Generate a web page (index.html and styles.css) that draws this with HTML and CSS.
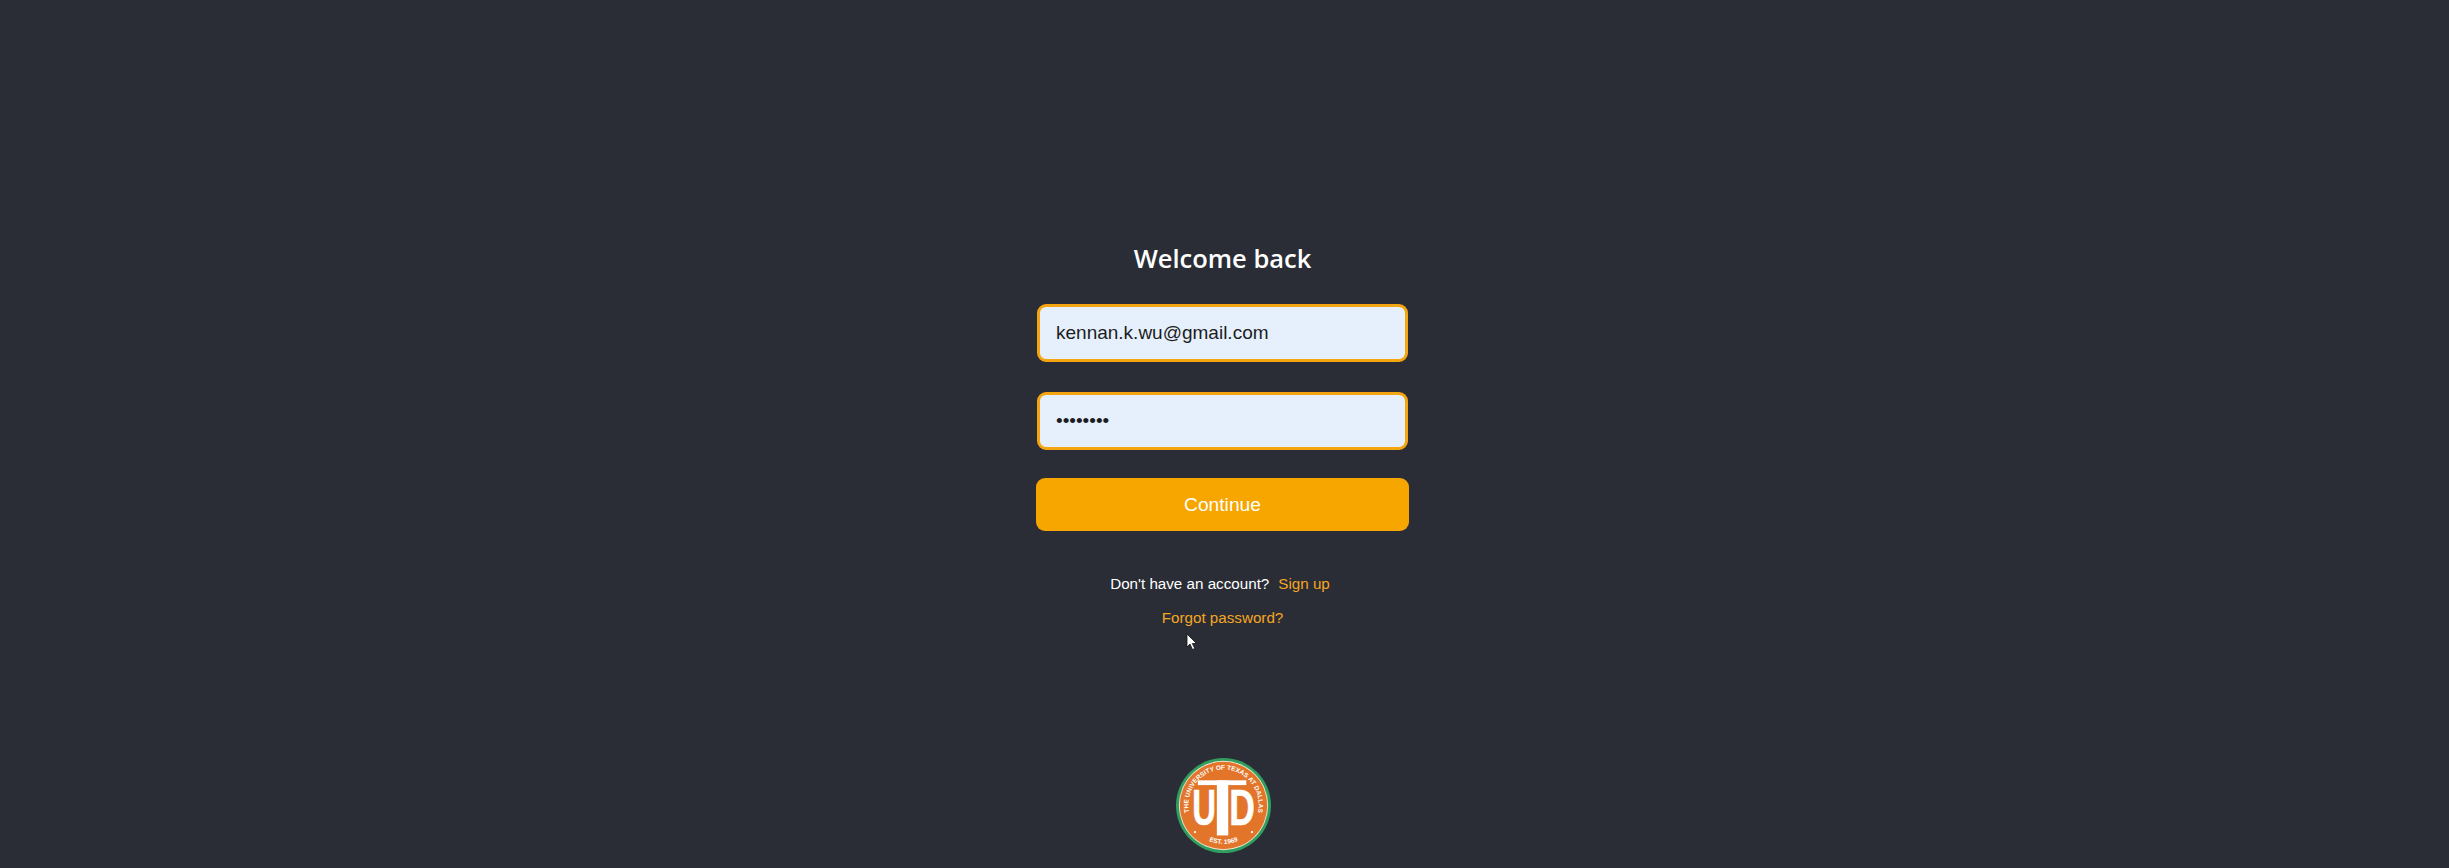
FILE: index.html
```html
<!DOCTYPE html>
<html lang="en">
<head>
    <meta charset="UTF-8">
    <meta name="viewport" content="width=device-width, initial-scale=1.0">
    <title>login</title>

    <!-- styling -->
    <link rel="stylesheet" href="styles.css">
</head>
<body>
    <div class="container-login">
        <form action="" id="loginform">
            <h1 id="login-heading">Welcome back</h1>

            <input type="email" class="login-input" name="email" value="kennan.k.wu@gmail.com">
            <input type="password" class="login-input" name="password" value="password">

            <button type="submit" id="login-btn">Continue</button>
        </form>

        <p class="signup-line">Don't have an account?<a href="#" class="signup-link">Sign up</a></p>
        <p class="forgot-line"><a href="#">Forgot password?</a></p>

        <svg class="seal" viewBox="0 0 100 100" role="img" aria-label="The University of Texas at Dallas seal">
            <defs>
                <path id="seal-top" d="M 17 66 A 37 37 0 1 1 83 66"></path>
                <path id="seal-bottom" d="M 22 79 A 40 40 0 0 0 78 79"></path>
            </defs>
            <circle cx="50" cy="50" r="50" fill="#2f9e5f"></circle>
            <circle cx="50" cy="50" r="47" fill="#f3e3cf"></circle>
            <circle cx="50" cy="50" r="46" fill="#e2752a"></circle>
            <text class="seal-ring"><textPath href="#seal-top" startOffset="50%" text-anchor="middle">THE UNIVERSITY OF TEXAS AT DALLAS</textPath></text>
            <text class="seal-ring"><textPath href="#seal-bottom" startOffset="50%" text-anchor="middle">EST. 1969</textPath></text>
            <circle cx="20" cy="78" r="1.2" fill="#ffffff"></circle>
            <circle cx="80" cy="78" r="1.2" fill="#ffffff"></circle>
            <rect x="23" y="23.5" width="51" height="5" fill="#ffffff"></rect>
            <rect x="43" y="23.5" width="12" height="58" fill="#ffffff"></rect>
            <text class="seal-letter" x="29.5" y="70" textLength="25" lengthAdjust="spacingAndGlyphs" text-anchor="middle">U</text>
            <text class="seal-letter" x="69.5" y="70" textLength="27" lengthAdjust="spacingAndGlyphs" text-anchor="middle">D</text>
        </svg>
    </div>

    <!-- mouse pointer caught in the capture -->
    <svg class="pointer" viewBox="0 0 12 18">
        <path d="M1 1 L1 14 L4 11 L6.5 16.5 L8.8 15.5 L6.3 10.5 L10.5 10.5 Z" fill="#ffffff" stroke="#111111" stroke-width="0.8"></path>
    </svg>
</body>

</html>
```

FILE: styles.css
```css
html, body {
    height: 100%;
}

body {
    box-sizing: border-box;
    background-color: #2a2d36;
    font-family: 'Liberation Sans', Arial, sans-serif;
    margin: 0;
    padding-right: 4px;
    overflow: hidden;
}

.container-login {
    display: flex;
    flex-direction: column;
    align-items: center;
    width: 373px;
    margin: 0 auto;
    padding-top: 242px;
}

#loginform {
    display: flex;
    flex-direction: column;
    width: 100%;
}

#login-heading {
    font-family: 'Open Sans', 'Noto Sans', sans-serif;
    font-size: 25.5px;
    font-weight: 600;
    line-height: 33px;
    text-align: center;
    margin: 0 0 29px;
    color: #ffffff;
}

.login-input {
    box-sizing: border-box;
    height: 58px;
    width: 371px;
    margin: 0 1px 30px;
    padding: 0 16px;
    border: 3px solid #f5a50f;
    border-radius: 9px;
    background-color: #e6f0fc;
    color: #1b1d22;
    font-family: 'Liberation Sans', Arial, sans-serif;
    font-size: 19px;
    outline: none;
}

.login-input[type="password"] {
    margin-bottom: 28px;
}

#login-btn {
    height: 53px;
    width: 100%;
    background-color: #f7a600;
    color: #ffffff;
    border: none;
    border-radius: 9px;
    font-family: 'Liberation Sans', Arial, sans-serif;
    font-size: 19.2px;
    cursor: pointer;
}

p {
    margin: 0;
    text-align: center;
    font-size: 15.2px;
    line-height: 20px;
    color: #ffffff;
}

a {
    color: #f5a623;
    text-decoration: none;
}

.signup-line {
    margin-top: 43px;
    padding-right: 5px;
}

.signup-link {
    margin-left: 9px;
}

.forgot-line {
    margin-top: 14px;
}

.seal {
    display: block;
    width: 95px;
    height: 95px;
    margin-top: 130px;
    margin-left: 1px;
}

.seal-ring {
    fill: #ffffff;
    font-family: 'Liberation Sans', Arial, sans-serif;
    font-size: 6.8px;
    font-weight: 700;
}

.seal-letter {
    fill: #ffffff;
    stroke: #ffffff;
    stroke-width: 0.6px;
    font-family: 'Liberation Sans', Arial, sans-serif;
    font-size: 53px;
    font-weight: 700;
}

.pointer {
    position: absolute;
    left: 1186px;
    top: 633px;
    width: 12px;
    height: 18px;
}
```
